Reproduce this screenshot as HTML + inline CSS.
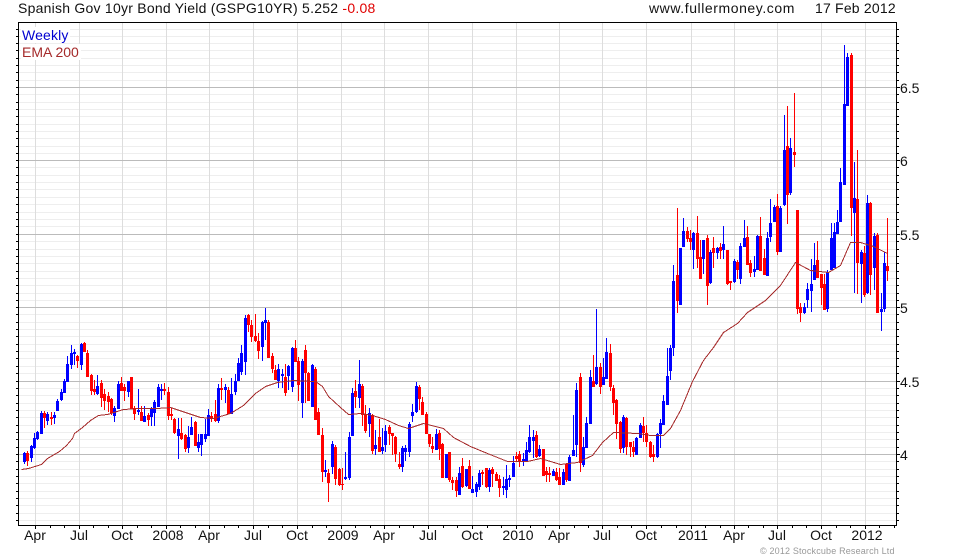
<!DOCTYPE html>
<html><head><meta charset="utf-8"><title>Spanish Gov 10yr Bond Yield</title>
<style>
html,body{margin:0;padding:0;background:#fff}
#c{position:relative;width:980px;height:560px;overflow:hidden;background:#fff;font-family:"Liberation Sans",Arial,sans-serif;font-size:14px;color:#111}
#c svg{position:absolute;left:0;top:0}
.t{position:absolute;white-space:nowrap;line-height:16px}
.x{position:absolute;top:527px;width:60px;text-align:center;line-height:16px}
.y{position:absolute;left:900px;line-height:16px}
</style></head><body><div id="c">
<svg width="980" height="560" shape-rendering="crispEdges" fill="none">
<g transform="translate(0,.5)">
<path stroke="#eee" d="M19 461H896M19 469H896M19 476H896M19 483H896M19 491H896M19 498H896M19 505H896M19 513H896M19 520H896M19 388H896M19 395H896M19 403H896M19 410H896M19 417H896M19 425H896M19 432H896M19 439H896M19 447H896M19 314H896M19 322H896M19 329H896M19 336H896M19 344H896M19 351H896M19 358H896M19 366H896M19 373H896M19 241H896M19 249H896M19 256H896M19 263H896M19 271H896M19 278H896M19 285H896M19 293H896M19 300H896M19 167H896M19 175H896M19 182H896M19 189H896M19 197H896M19 204H896M19 212H896M19 219H896M19 226H896M19 94H896M19 102H896M19 109H896M19 116H896M19 124H896M19 131H896M19 138H896M19 146H896M19 153H896M19 80H896M19 72H896M19 65H896M19 58H896M19 50H896M19 43H896M19 36H896M19 29H896"/>
</g>
<g transform="translate(.5,0)">
<path stroke="#ddd" d="M35 23V525M79 23V525M122 23V525M166 23V525M209 23V525M253 23V525M297 23V525M341 23V525M384 23V525M428 23V525M472 23V525M516 23V525M559 23V525M602 23V525M646 23V525M691 23V525M734 23V525M777 23V525M821 23V525M865 23V525"/>
</g>
<g transform="translate(0,.5)">
<path stroke="#bbb" d="M19 87H896M19 160H896M19 234H896M19 307H896M19 381H896M19 454H896"/>
<path stroke="#000" d="M16 520H18M16 513H18M16 505H18M16 498H18M16 491H18M16 483H18M16 476H18M16 469H18M16 461H18M16 454H18M16 447H18M16 439H18M16 432H18M16 425H18M16 417H18M16 410H18M16 403H18M16 395H18M16 388H18M16 381H18M16 373H18M16 366H18M16 358H18M16 351H18M16 344H18M16 336H18M16 329H18M16 322H18M16 314H18M16 307H18M16 300H18M16 293H18M16 285H18M16 278H18M16 271H18M16 263H18M16 256H18M16 249H18M16 241H18M16 234H18M16 226H18M16 219H18M16 212H18M16 204H18M16 197H18M16 189H18M16 182H18M16 175H18M16 167H18M16 160H18M16 153H18M16 146H18M16 138H18M16 131H18M16 124H18M16 116H18M16 109H18M16 102H18M16 94H18M16 87H18M16 80H18M16 72H18M16 65H18M16 58H18M16 50H18M16 43H18M16 36H18M16 29H18"/>
<path stroke="#000" d="M897 520H899M897 513H899M897 505H899M897 498H899M897 491H899M897 483H899M897 476H899M897 469H899M897 461H899M897 454H900M897 447H899M897 439H899M897 432H899M897 425H899M897 417H899M897 410H899M897 403H899M897 395H899M897 388H899M897 381H900M897 373H899M897 366H899M897 358H899M897 351H899M897 344H899M897 336H899M897 329H899M897 322H899M897 314H899M897 307H900M897 300H899M897 293H899M897 285H899M897 278H899M897 271H899M897 263H899M897 256H899M897 249H899M897 241H899M897 234H900M897 226H899M897 219H899M897 212H899M897 204H899M897 197H899M897 189H899M897 182H899M897 175H899M897 167H899M897 160H900M897 153H899M897 146H899M897 138H899M897 131H899M897 124H899M897 116H899M897 109H899M897 102H899M897 94H899M897 87H900M897 80H899M897 72H899M897 65H899M897 58H899M897 50H899M897 43H899M897 36H899M897 29H899"/>
</g>
<g transform="translate(.5,0)">
<path stroke="#000" d="M35 526V529M79 526V529M122 526V529M166 526V529M209 526V529M253 526V529M297 526V529M341 526V529M384 526V529M428 526V529M472 526V529M516 526V529M559 526V529M602 526V529M646 526V529M691 526V529M734 526V529M777 526V529M821 526V529M865 526V529M50 526V528M64 526V528M93 526V528M108 526V528M137 526V528M151 526V528M180 526V528M195 526V528M224 526V528M238 526V528M268 526V528M282 526V528M312 526V528M326 526V528M355 526V528M370 526V528M399 526V528M413 526V528M443 526V528M457 526V528M487 526V528M501 526V528M530 526V528M545 526V528M574 526V528M588 526V528M617 526V528M631 526V528M661 526V528M676 526V528M705 526V528M720 526V528M748 526V528M763 526V528M792 526V528M806 526V528M836 526V528M850 526V528M879 526V528M894 526V528"/>
<!-- blue wicks -->
<path stroke="#00f" d="M24 452V464M31 445V462M34 433V449M37 431V440M41 411V434M47 412V425M54 412V424M57 399V411M61 389V401M64 379V393M67 356V382M71 345V369M74 349V365M81 343V370M97 375V395M114 406V422M118 381V409M128 381V397M138 389V415M144 406V422M151 407V426M154 400V426M158 384V407M161 384V400M178 418V459M188 426V453M191 417V435M198 434V452M201 434V456M205 419V442M208 409V436M218 384V423M225 384V403M231 378V414M235 374V395M238 358V381M241 345V375M245 315V375M262 321V361M265 308V340M278 364V388M282 369V388M288 365V390M292 347V392M302 359V418M312 364V407M325 460V477M332 441V474M345 452V480M349 432V480M352 388V436M359 360V408M369 408V437M375 430V455M382 428V454M385 425V452M402 446V472M405 445V461M409 422V457M412 404V422M416 382V413M436 429V450M446 454V478M459 467V495M466 469V487M472 476V493M476 482V497M479 470V490M489 468V492M503 477V495M506 465V498M509 475V487M513 456V477M523 453V466M526 442V461M529 425V453M533 430V458M539 445V457M553 469V476M563 469V485M569 455V481M573 415V456M576 383V457M583 437V467M586 417V448M590 370V424M596 309V385M603 358V385M606 338V379M623 415V453M636 437V455M640 423V438M657 433V458M660 419V448M663 395V425M667 348V405M670 345V380M673 265V356M680 248V305M683 218V247M693 232V269M703 240V274M710 250V284M717 247V259M723 226V259M734 259V283M740 243V284M744 220V247M754 256V277M757 235V270M767 232V276M770 199V242M774 205V222M780 206V252M784 115V206M790 138V195M804 303V314M807 283V308M811 259V312M814 243V280M827 270V312M831 223V270M834 223V268M837 210V234M840 168V222M844 45V185M847 53V106M854 162V293M861 250V303M867 195V294M874 233V290M881 293V331M884 252V312"/>
<!-- blue bodies -->
<path stroke="#00f" stroke-width="3" d="M24 453V462M31 446V458M34 438V448M37 432V439M41 413V434M47 414V421M54 415V418M57 401V411M61 392V400M64 381V393M67 364V382M71 353V365M74 352V354M81 344V365M97 386V394M114 408V416M118 384V409M128 381V392M138 410V412M144 416V422M151 408V417M154 402V413M158 387V407M161 389V391M178 429V436M188 437V448M191 427V435M198 442V448M201 434V445M205 434V439M208 415V436M218 388V421M225 387V390M231 394V414M235 381V392M238 363V381M241 353V372M245 318V362M262 322V347M265 320V323M278 369V381M282 374V376M288 366V376M292 348V387M302 361V403M312 365V407M325 470V472M332 444V467M345 477V479M349 437V478M352 393V436M359 384V398M369 413V424M375 445V449M382 447V451M385 431V445M402 448V467M405 448V452M409 424V452M412 412V416M416 386V412M436 434V450M446 454V478M459 473V495M466 469V486M472 489V493M476 484V492M479 473V487M489 470V487M503 486V488M506 479V490M509 478V480M513 463V477M523 459V461M526 450V461M529 437V452M533 437V441M539 449V456M553 471V476M563 472V485M569 457V481M573 450V456M576 390V445M583 447V465M586 423V448M590 377V424M596 367V384M603 377V385M606 352V379M623 417V448M636 438V455M640 425V438M657 434V457M660 423V434M663 401V425M667 376V405M670 348V371M673 281V348M680 248V305M683 231V247M693 233V250M703 240V259M710 252V283M717 248V253M723 244V250M734 261V282M740 246V279M744 238V247M754 269V272M757 236V270M767 238V276M770 223V237M774 207V222M780 208V252M784 150V205M790 148V193M804 307V313M807 289V300M811 284V291M814 265V280M827 272V309M831 238V270M834 232V268M837 222V234M840 182V222M844 104V185M847 57V106M854 198V213M861 252V264M867 203V293M874 236V268M881 309V312M884 263V309"/>
<!-- red wicks -->
<path stroke="#f00" d="M27 451V466M44 411V428M51 412V425M77 355V368M84 342V352M87 350V377M91 374V395M94 380V395M101 380V407M104 389V410M108 392V412M111 398V415M121 377V391M124 384V401M131 377V409M134 406V420M141 406V421M148 413V426M164 383V395M168 387V420M171 408V420M174 418V434M181 418V440M185 434V452M195 421V446M211 412V422M215 400V422M221 378V400M228 387V414M248 314V332M251 320V342M255 314V342M258 333V359M268 320V358M272 353V373M275 365V380M285 364V396M295 340V362M298 357V401M305 345V403M308 372V401M315 367V420M318 408V435M322 428V482M328 469V502M335 445V485M339 468V486M342 468V490M355 380V408M362 384V426M365 405V433M372 414V454M379 419V452M389 425V445M392 433V455M395 436V462M399 452V469M419 385V410M422 397V415M426 412V434M429 434V447M432 437V453M439 430V460M442 443V478M449 452V482M452 477V490M456 477V497M462 458V488M469 460V489M482 470V485M486 468V488M492 467V487M496 472V481M499 475V497M516 452V462M519 451V467M536 431V458M543 449V476M546 467V482M549 467V482M556 468V481M559 468V485M566 463V482M580 373V472M593 355V387M600 363V394M610 344V391M613 385V415M616 399V439M620 421V453M626 417V455M630 442V457M633 441V457M643 417V442M646 425V447M650 441V458M653 445V462M677 208V313M687 227V242M690 230V250M697 216V268M700 240V279M707 235V305M713 237V268M720 243V259M727 250V285M730 281V290M737 260V279M747 226V265M750 260V277M760 217V271M764 249V275M777 194V255M787 106V224M794 93V167M797 210V314M800 303V322M817 241V278M821 274V305M824 274V310M851 53V236M857 150V294M864 246V297M870 202V295M877 233V313M887 218V281"/>
<!-- red bodies -->
<path stroke="#f00" stroke-width="3" d="M27 453V461M44 413V418M51 417V419M77 356V361M84 343V352M87 353V377M91 375V391M94 389V392M101 383V398M104 394V401M108 396V402M111 399V413M121 383V391M124 387V391M131 377V409M134 408V414M141 412V421M148 415V420M164 389V391M168 392V416M171 414V416M174 419V433M181 433V439M185 435V449M195 422V446M211 416V419M215 414V421M221 388V390M228 390V414M248 315V325M251 325V337M255 336V341M258 341V351M268 322V358M272 356V369M275 370V380M285 377V393M295 348V362M298 361V385M305 350V373M308 373V401M315 369V420M318 412V435M322 435V472M328 473V483M335 447V479M339 469V485M342 484V485M355 391V397M362 386V415M365 414V431M372 415V451M379 437V452M389 427V434M392 433V436M395 437V454M399 464V467M419 387V399M422 402V415M426 414V434M429 434V444M432 446V449M439 433V449M442 444V478M449 452V480M452 480V483M456 480V491M462 466V487M469 466V489M482 472V474M486 468V487M492 469V474M496 474V481M499 479V488M516 456V459M519 454V461M536 435V457M543 449V476M546 471V475M549 473V475M556 472V480M559 477V485M566 464V480M580 377V463M593 381V387M600 367V387M610 353V387M613 388V403M616 400V424M620 422V449M626 418V447M630 442V447M633 447V452M643 426V433M646 433V442M650 442V457M653 454V457M677 275V301M687 231V239M690 238V242M697 233V259M700 257V279M707 238V286M713 248V253M720 247V251M727 250V284M730 281V283M737 262V270M747 237V265M750 263V273M760 236V271M764 258V275M777 206V252M787 146V195M794 152V155M797 210V309M800 307V313M817 260V278M821 274V288M824 284V310M851 55V208M857 199V263M864 253V295M870 203V275M877 235V313M887 266V271"/>
</g>
<polyline stroke="#a52a2a" stroke-width="1" points="21.5,469.5 28.5,468.5 41.5,464.5 47.5,458.5 59.5,451.5 66.5,445.5 72.5,438.5 74.5,433.5 82.5,427.5 90.5,420.5 98.5,415.5 107.5,414.5 123.5,409.5 140.5,408.5 157.5,408.5 170.5,407.5 185.5,412.5 200.5,417.5 213.5,418.5 230.5,413.5 243.5,405.5 255.5,393.5 265.5,386.5 277.5,382.5 293.5,380.5 315.5,381.5 322.5,386.5 328.5,396.5 340.5,407.5 348.5,414.5 360.5,413.5 372.5,415.5 385.5,419.5 398.5,425.5 408.5,428.5 423.5,423.5 443.5,428.5 453.5,437.5 470.5,446.5 487.5,453.5 507.5,461.5 527.5,461.5 540.5,458.5 560.5,464.5 577.5,462.5 592.5,455.5 602.5,442.5 613.5,432.5 637.5,433.5 650.5,435.5 663.5,435.5 670.5,428.5 680.5,410.5 692.5,381.5 703.5,360.5 713.5,347.5 723.5,332.5 737.5,323.5 747.5,312.5 765.5,300.5 780.5,285.5 795.5,262.5 810.5,270.5 828.5,272.5 840.5,265.5 850.5,242.5 860.5,242.5 873.5,246.5 887.5,253.5"/>
<rect x="18.5" y="22.5" width="878" height="503" stroke="#000"/>
<rect x="21" y="27" width="49" height="16" fill="#fff"/>
<rect x="21" y="44" width="60" height="16" fill="#fff"/>
</svg>
<div class="t" style="left:18px;top:0;letter-spacing:.24px">Spanish Gov 10yr Bond Yield (GSPG10YR) 5.252 <span style="color:#e00000">-0.08</span></div>
<div class="t" style="left:649px;top:0;letter-spacing:.57px">www.fullermoney.com</div>
<div class="t" style="left:815px;top:0;letter-spacing:.2px">17 Feb 2012</div>
<div class="t" style="left:22px;top:27px;color:#0000d0;letter-spacing:.15px">Weekly</div>
<div class="t" style="left:22px;top:44px;color:#a52a2a">EMA 200</div>
<div class="y" style="top:80px">6.5</div>
<div class="y" style="top:153px">6</div>
<div class="y" style="top:227px">5.5</div>
<div class="y" style="top:300px">5</div>
<div class="y" style="top:374px">4.5</div>
<div class="y" style="top:447px">4</div>
<div class="x" style="left:5px">Apr</div>
<div class="x" style="left:49px">Jul</div>
<div class="x" style="left:92px">Oct</div>
<div class="x" style="left:138px">2008</div>
<div class="x" style="left:179px">Apr</div>
<div class="x" style="left:223px">Jul</div>
<div class="x" style="left:267px">Oct</div>
<div class="x" style="left:313px">2009</div>
<div class="x" style="left:354px">Apr</div>
<div class="x" style="left:398px">Jul</div>
<div class="x" style="left:442px">Oct</div>
<div class="x" style="left:488px">2010</div>
<div class="x" style="left:529px">Apr</div>
<div class="x" style="left:572px">Jul</div>
<div class="x" style="left:616px">Oct</div>
<div class="x" style="left:663px">2011</div>
<div class="x" style="left:704px">Apr</div>
<div class="x" style="left:747px">Jul</div>
<div class="x" style="left:791px">Oct</div>
<div class="x" style="left:837px">2012</div>
<div class="t" style="left:760px;top:544px;font-size:9px;letter-spacing:.17px;line-height:14px;color:#999">© 2012 Stockcube Research Ltd</div>
</div></body></html>
